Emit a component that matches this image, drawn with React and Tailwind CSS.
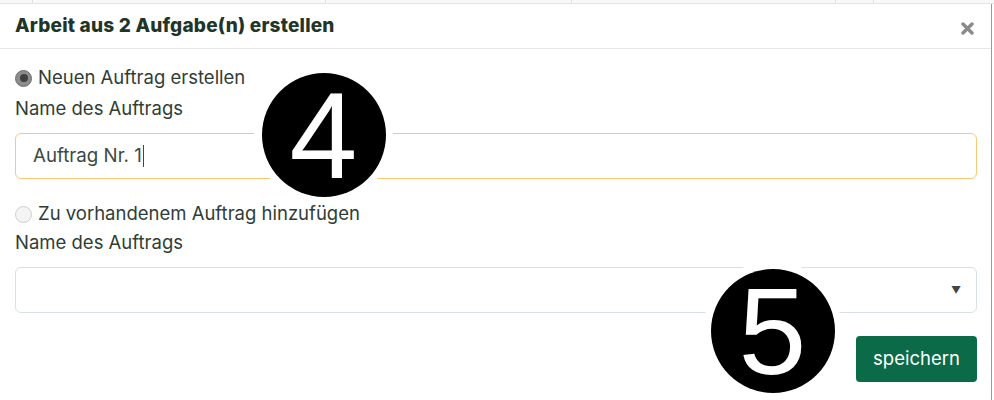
import React from "react";

function Radio({ checked }) {
  return checked ? (
    <span className="w-[17px] h-[17px] rounded-full bg-[#8c8c8c] border border-[#6f6f6f] flex items-center justify-center shrink-0">
      <span className="w-[8px] h-[8px] rounded-full bg-[#404040]" />
    </span>
  ) : (
    <span className="w-[17px] h-[17px] rounded-full bg-[#f4f4f4] border border-[#cfcfcf] shrink-0" />
  );
}

function Badge({ n, className }) {
  return (
    <div className={`absolute w-[139px] h-[139px] rounded-full bg-white flex items-center justify-center ${className}`}>
      <div className="w-[124px] h-[124px] rounded-full bg-black flex items-center justify-center">
        <span className="text-white text-[122px] leading-none font-['Liberation_Sans',Arial,sans-serif] mt-[2px]">{n}</span>
      </div>
    </div>
  );
}

export default function App() {
  const body = "font-['Inter',sans-serif] text-[#2f3d36]";
  return (
    <div className="relative w-[994px] h-[400px] bg-white overflow-hidden">
      {/* table behind the dialog */}
      <div className="h-[4px] flex bg-[#f7f8f8] border-b border-[#e1e4e4]">
        <div className="w-[33px] border-r border-[#dde1e1]" />
        <div className="w-[293px] border-r border-[#dde1e1]" />
        <div className="w-[246px] border-r border-[#dde1e1]" />
        <div className="w-[264px] border-r border-[#dde1e1]" />
        <div className="w-[38px] border-r border-[#dde1e1]" />
      </div>

      <div className="w-[992px] h-[396px] bg-white border-r border-[#9a9a9a] rounded-tl-[6px]">
        <div className="h-[45px] flex items-center justify-between pl-[15px] pr-[17px] border-b border-[#e6e8e8]">
          <h1 className="font-['Inter',sans-serif] font-extrabold text-[19px] text-[#1f3528] tracking-[0.2px]">
            Arbeit aus 2 Aufgabe(n) erstellen
          </h1>
          <svg width="13" height="13" viewBox="0 0 13 13" className="mt-[4px]">
            <path d="M2 2 L11 11 M11 2 L2 11" stroke="#8a8a8a" strokeWidth="3.4" strokeLinecap="round" />
          </svg>
        </div>

        <div className={`px-[15px] pt-[17px] ${body}`}>
          <label className="h-[24px] flex items-center gap-[6px] text-[18.5px]">
            <Radio checked />
            Neuen Auftrag erstellen
          </label>
          <div className="h-[24px] mt-[7px] flex items-center text-[18.5px]">Name des Auftrags</div>
          <div className="mt-[12px] w-[962px] h-[46px] rounded-[6px] border border-[#fcc875] flex items-center px-[17px] text-[18.7px] text-[#3b4a43]">
            Auftrag Nr. 1<span className="w-px h-[22px] bg-[#3b4a43] ml-[1px]" />
          </div>

          <label className="mt-[23px] h-[24px] flex items-center gap-[6px] text-[18.5px]">
            <Radio />
            Zu vorhandenem Auftrag hinzufügen
          </label>
          <div className="h-[24px] mt-[5px] flex items-center text-[18.5px]">Name des Auftrags</div>
          <div className="mt-[12px] w-[962px] h-[46px] rounded-[6px] border border-[#d7e0e2] flex items-center justify-end pr-[15px]">
            <span className="text-[10px] text-[#444]">▼</span>
          </div>

          <div className="mt-[23px] flex justify-end w-[962px]">
            <button className="w-[121px] h-[46px] rounded-[4px] bg-[#0b6a47] text-white text-[18.5px] font-['Inter',sans-serif]">
              speichern
            </button>
          </div>
        </div>
      </div>

      <Badge n="4" className="left-[254px] top-[65px]" />
      <Badge n="5" className="left-[703px] top-[261px]" />
    </div>
  );
}
